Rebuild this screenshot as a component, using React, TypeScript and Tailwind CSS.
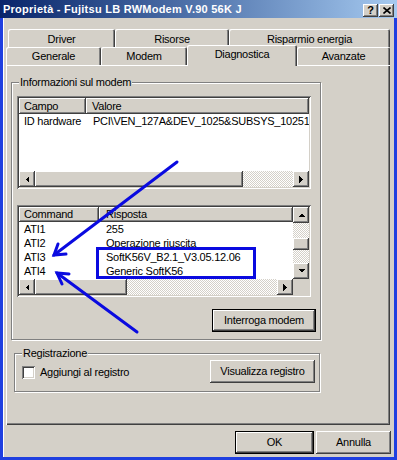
import React from "react";

const FONT =
  "font-['Liberation_Sans',Arial,sans-serif] text-[11px] tracking-[-0.25px] text-black";
const RAISED =
  "bg-[#d4d0c8] shadow-[inset_-1px_-1px_0_#404040,inset_1px_1px_0_#ffffff,inset_-2px_-2px_0_#808080,inset_2px_2px_0_#d4d0c8]";
const SUNKEN =
  "shadow-[inset_1px_1px_0_#808080,inset_-1px_-1px_0_#ffffff,inset_2px_2px_0_#404040,inset_-2px_-2px_0_#d4d0c8]";
const DITHER =
  "bg-[image:repeating-conic-gradient(#ffffff_0%_25%,#d4d0c8_0%_50%)] bg-[length:2px_2px]";
const TAB =
  "flex items-center justify-center rounded-t-[2px] shadow-[inset_1px_1px_0_#ffffff,inset_-1px_0_0_#404040,inset_-2px_0_0_#808080] bg-[#d4d0c8]";
const GROUP =
  "relative border border-[#808080] shadow-[inset_1px_1px_0_#ffffff,1px_1px_0_#ffffff]";

function Arrow({ dir }: { dir: "l" | "r" | "u" | "d" }) {
  if (dir === "l")
    return (
      <svg width="4" height="7" viewBox="0 0 4 7" shapeRendering="crispEdges">
        <polygon points="4,0 4,7 0.5,3.5" fill="#000" />
      </svg>
    );
  if (dir === "r")
    return (
      <svg width="4" height="7" viewBox="0 0 4 7" shapeRendering="crispEdges">
        <polygon points="0,0 0,7 3.5,3.5" fill="#000" />
      </svg>
    );
  if (dir === "u")
    return (
      <svg width="7" height="4" viewBox="0 0 7 4" shapeRendering="crispEdges">
        <polygon points="0,4 7,4 3.5,0.5" fill="#000" />
      </svg>
    );
  return (
    <svg width="7" height="4" viewBox="0 0 7 4" shapeRendering="crispEdges">
      <polygon points="0,0 7,0 3.5,3.5" fill="#000" />
    </svg>
  );
}

function SBtn({ dir }: { dir: "l" | "r" | "u" | "d" }) {
  return (
    <div className={`${RAISED} w-[16px] h-[16px] shrink-0 flex items-center justify-center`}>
      <Arrow dir={dir} />
    </div>
  );
}

function Button({
  children,
  w,
  def,
}: {
  children: React.ReactNode;
  w: string;
  def?: boolean;
}) {
  if (def)
    return (
      <div className={`${w} h-[23px] border border-black flex`}>
        <div className={`${RAISED} flex-1 flex items-center justify-center`}>{children}</div>
      </div>
    );
  return <div className={`${RAISED} ${w} h-[23px] flex items-center justify-center`}>{children}</div>;
}

export default function App() {
  return (
    <div className={`relative w-[397px] h-[460px] flex flex-col overflow-hidden ${FONT}`}>
      {/* Title bar */}
      <div className="h-[18px] shrink-0 flex items-center bg-linear-to-r from-[#0a246a] to-[#a6caf0] pl-[3px]">
        <span className="flex-1 text-white font-bold text-[11px] tracking-[0.25px] leading-none whitespace-nowrap">
          Proprietà - Fujitsu LB RWModem V.90 56K J
        </span>
        <div className="flex self-end gap-[1px] pb-[1px] pr-[3px]">
          <div className={`${RAISED} w-[15px] h-[13px] flex items-center justify-center font-bold text-[11px] leading-none pb-[1px] tracking-normal`}>
            ?
          </div>
          <div className={`${RAISED} w-[15px] h-[13px] flex items-center justify-center pb-[1px]`}>
            <svg width="8" height="7" viewBox="0 0 8 7">
              <path d="M0.5 0.5 L7.5 6.5 M7.5 0.5 L0.5 6.5" stroke="#000" strokeWidth="1.6" />
            </svg>
          </div>
        </div>
      </div>

      {/* Body */}
      <div className="flex-1 flex flex-col bg-[#d4d0c8] border-x-[3px] border-b-[3px] border-[#1f3fe0] shadow-[inset_1px_0_0_#ffffff] px-[3px] pt-[11px]">
        {/* Tabs row 1 */}
        <div className="flex h-[18px] ml-[2px] shrink-0">
          <div className={`${TAB} w-[107px] pt-[2px]`}>Driver</div>
          <div className={`${TAB} w-[114px] pt-[2px]`}>Risorse</div>
          <div className={`${TAB} w-[161px] pt-[2px]`}>Risparmio energia</div>
        </div>
        {/* Tabs row 2 */}
        <div className="flex h-[18px] items-end shrink-0">
          <div className={`${TAB} w-[95px] h-[18px]`}>Generale</div>
          <div className={`${TAB} w-[86px] h-[18px]`}>Modem</div>
          <div className={`${TAB} w-[110px] h-[21px] mb-[-1px] relative z-10 pb-[2px]`}>Diagnostica</div>
          <div className={`${TAB} w-[93px] h-[18px]`}>Avanzate</div>
        </div>

        {/* Panel */}
        <div className="w-[384px] h-[360px] shrink-0 flex flex-col shadow-[inset_1px_1px_0_#ffffff,inset_-1px_-1px_0_#404040,inset_-2px_-2px_0_#808080]">
          {/* Group 1 */}
          <div className={`${GROUP} mt-[17px] ml-[5px] w-[310px] px-[5px] pt-[13px] pb-[7px]`}>
            <span className="absolute -top-[7px] left-[7px] px-[1px] bg-[#d4d0c8] leading-[13px]">
              Informazioni sul modem
            </span>

            {/* List 1 */}
            <div className={`w-[294px] h-[93px] bg-white p-[2px] ${SUNKEN}`}>
              <div className="h-full flex flex-col">
                <div className="flex h-[16px] shrink-0">
                  <div className={`${RAISED} w-[67px] flex items-center pl-[5px]`}>Campo</div>
                  <div className={`${RAISED} flex-1 flex items-center pl-[6px]`}>Valore</div>
                </div>
                <div className="flex-1 overflow-hidden">
                  <div className="flex h-[14px] items-center whitespace-nowrap">
                    <div className="w-[67px] pl-[5px] shrink-0">ID hardware</div>
                    <div className="pl-[7px]">{"PCI\\VEN_127A&DEV_1025&SUBSYS_10251"}</div>
                  </div>
                </div>
                <div className="flex h-[16px] shrink-0">
                  <SBtn dir="l" />
                  <div className={`${RAISED} w-[208px]`} />
                  <div className={`flex-1 ${DITHER}`} />
                  <SBtn dir="r" />
                </div>
              </div>
            </div>

            {/* List 2 */}
            <div className={`w-[294px] h-[92px] bg-white p-[2px] mt-[16px] ${SUNKEN}`}>
              <div className="h-full flex flex-col">
                <div className="flex flex-1 min-h-0">
                  <div className="flex-1 flex flex-col min-w-0 overflow-hidden">
                    <div className="flex h-[15px] shrink-0">
                      <div className={`${RAISED} w-[80px] flex items-center pl-[5px]`}>Command</div>
                      <div className={`${RAISED} flex-1 flex items-center pl-[7px]`}>Risposta</div>
                    </div>
                    {[
                      ["ATI1", "255"],
                      ["ATI2", "Operazione riuscita"],
                      ["ATI3", "SoftK56V_B2.1_V3.05.12.06"],
                      ["ATI4", "Generic SoftK56"],
                    ].map(([c, r]) => (
                      <div key={c} className="flex h-[14px] items-center whitespace-nowrap shrink-0">
                        <div className="w-[80px] pl-[5px] shrink-0">{c}</div>
                        <div className="pl-[7px]">{r}</div>
                      </div>
                    ))}
                  </div>
                  <div className="w-[16px] flex flex-col shrink-0">
                    <SBtn dir="u" />
                    <div className={`h-[15px] shrink-0 ${DITHER}`} />
                    <div className={`h-[12px] shrink-0 ${RAISED}`} />
                    <div className={`flex-1 ${DITHER}`} />
                    <SBtn dir="d" />
                  </div>
                </div>
                <div className="flex h-[16px] shrink-0">
                  <SBtn dir="l" />
                  <div className={`${RAISED} w-[92px]`} />
                  <div className={`flex-1 ${DITHER}`} />
                  <SBtn dir="r" />
                  <div className="w-[16px] bg-[#d4d0c8]" />
                </div>
              </div>
            </div>

            <div className="flex justify-end mt-[12px] mr-[-1px]">
              <Button w="w-[104px]" def>
                Interroga modem
              </Button>
            </div>
          </div>

          {/* Group 2 */}
          <div className={`${GROUP} mt-[13px] ml-[8px] w-[306px] pl-[7px] pr-[4px] pt-[6px] pb-[8px] flex items-center`}>
            <span className="absolute -top-[7px] left-[7px] px-[1px] bg-[#d4d0c8] leading-[13px]">
              Registrazione
            </span>
            <div className={`w-[13px] h-[13px] bg-white shrink-0 ${SUNKEN} mt-[1px]`} />
            <span className="ml-[5px] flex-1 mt-[1px]">Aggiungi al registro</span>
            <Button w="w-[105px]">Visualizza registro</Button>
          </div>
        </div>

        {/* Bottom buttons */}
        <div className="flex justify-end gap-[2px] mt-[6px]">
          <Button w="w-[79px]" def>
            OK
          </Button>
          <Button w="w-[75px]">Annulla</Button>
        </div>
      </div>

      {/* Annotations */}
      <svg
        className="absolute inset-0 pointer-events-none"
        width="397"
        height="460"
        viewBox="0 0 397 460"
      >
        <rect x="97.5" y="248.5" width="157" height="29" fill="none" stroke="#0a0ae0" strokeWidth="3" />
        <g stroke="#0a0ae0" strokeWidth="3" strokeLinecap="round" fill="none">
          <line x1="177" y1="162" x2="54" y2="255" />
          <polyline points="66,254 54,255 58,244" />
          <line x1="137" y1="332" x2="57" y2="273" />
          <polyline points="62,284 57,273 69,274" />
        </g>
      </svg>
    </div>
  );
}
